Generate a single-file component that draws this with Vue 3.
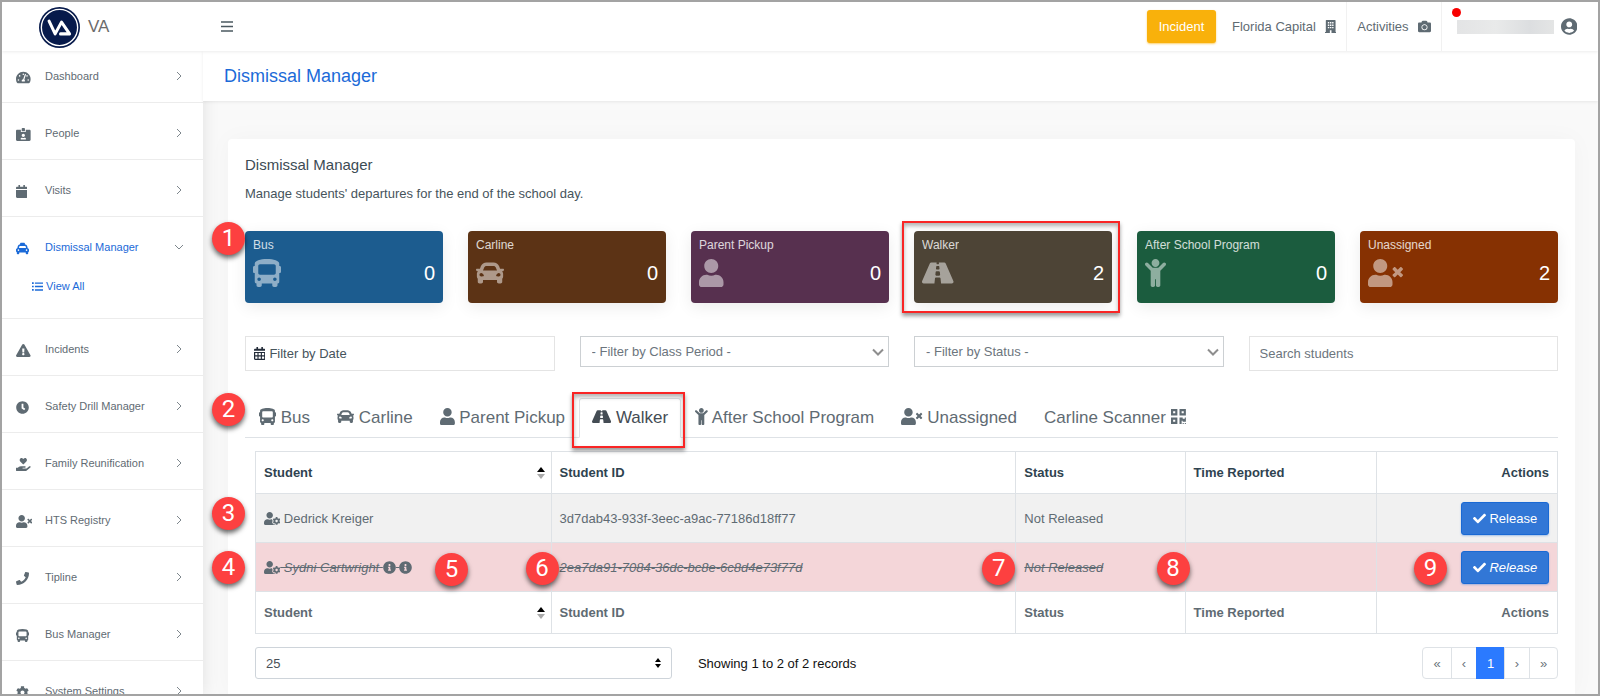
<template>
  <div class="page">
    <header class="topbar">
      <a href="#" class="brand">
        <svg class="brand-logo" viewBox="0 0 122 122" aria-hidden="true">
          <circle cx="61" cy="61" r="61" fill="#071a4b" />
          <circle cx="61" cy="61" r="54" fill="none" stroke="#fff" stroke-width="4" />
          <path d="M30 42L48 80L67 45L91 80H64" fill="none" stroke="#fff" stroke-width="9" stroke-linecap="round" stroke-linejoin="round" />
        </svg>
        <span>VA</span>
      </a>
      <button class="menu-btn" aria-label="Toggle menu">
        <svg viewBox="0 0 12 11"><path d="M0 1h12M0 5.5h12M0 10h12" stroke="#4b5960" stroke-width="1.4" /></svg>
      </button>
      <div class="topbar-right">
        <button class="incident-btn">Incident</button>
        <a href="#" class="top-item first">Florida Capital <Icon name="building" /></a>
        <a href="#" class="top-item">Activities <Icon name="camera" /></a>
        <a href="#" class="top-user" aria-label="Account">
          <span class="alert-dot"></span>
          <span class="user-name"></span>
          <Icon name="userCircle" />
        </a>
      </div>
    </header>

    <div class="body">
      <nav class="sidebar">
        <ul>
          <li v-for="item in menu" :key="item.label" :class="{ open: item.children }">
            <a href="#" class="nav-row">
              <span class="nav-icon"><Icon :name="item.icon" /></span>
              <span class="nav-label">{{ item.label }}</span>
              <svg class="nav-arrow" viewBox="0 0 10 10"><path d="M3 1l4 4-4 4" /></svg>
            </a>
            <a v-for="child in item.children" :key="child" href="#" class="nav-child">
              <Icon name="list" /> {{ child }}
            </a>
          </li>
        </ul>
      </nav>

      <div class="main">
        <div class="title-bar">
          <h1>Dismissal Manager</h1>
        </div>

        <section class="card">
          <h2>Dismissal Manager</h2>
          <p class="intro">Manage students' departures for the end of the school day.</p>

          <div class="stats">
            <span class="marker m1">1</span>
            <div v-for="stat in stats" :key="stat.label" class="stat" :class="stat.color">
              <div class="stat-label">{{ stat.label }}</div>
              <div class="stat-row">
                <Icon :name="stat.icon" />
                <span class="stat-count">{{ stat.count }}</span>
              </div>
              <span v-if="stat.label === activeTab" class="highlight"></span>
            </div>
          </div>

          <div class="filters">
            <label class="date-box">
              <Icon name="calendarAlt" />
              <input type="text" placeholder="Filter by Date" aria-label="Filter by Date">
            </label>
            <div class="select-box">
              <select aria-label="Filter by Class Period">
                <option>- Filter by Class Period -</option>
              </select>
              <svg viewBox="0 0 12 8"><path d="M1 1.5l5 5 5-5" /></svg>
            </div>
            <div class="select-box">
              <select aria-label="Filter by Status">
                <option>- Filter by Status -</option>
              </select>
              <svg viewBox="0 0 12 8"><path d="M1 1.5l5 5 5-5" /></svg>
            </div>
            <input v-model="search" class="search" type="text" placeholder="Search students" aria-label="Search students">
          </div>

          <div class="tabs" role="tablist">
            <span class="marker m2">2</span>
            <button
              v-for="stat in stats"
              :key="stat.label"
              class="tab"
              role="tab"
              :class="{ active: stat.label === activeTab }"
              @click="activeTab = stat.label"
            >
              <Icon :name="stat.icon" /> {{ stat.label }}
              <span v-if="stat.label === activeTab" class="highlight"></span>
            </button>
            <button class="tab" role="tab">Carline Scanner <Icon name="qrcode" /></button>
          </div>

          <div class="table-area">
            <table>
              <colgroup>
                <col class="col-student">
                <col class="col-id">
                <col class="col-status">
                <col class="col-time">
                <col>
              </colgroup>
              <thead>
                <tr>
                  <th>
                    <div class="sortable">Student <svg viewBox="0 0 10 12"><path d="M5 0l4 5H1z" fill="#000" /><path d="M5 12l4-5H1z" fill="#aaa" /></svg></div>
                  </th>
                  <th>Student ID</th>
                  <th>Status</th>
                  <th>Time Reported</th>
                  <th class="right">Actions</th>
                </tr>
              </thead>
              <tbody>
                <tr v-for="student in students" :key="student.id" :class="{ absent: student.absent }">
                  <td>
                    <Icon name="userCog" /> {{ student.name }}
                    <template v-if="student.absent"><Icon name="info" />&nbsp;<Icon name="info" /></template>
                    <span v-if="!student.absent" class="marker m3">3</span>
                    <template v-else>
                      <span class="marker m4">4</span>
                      <span class="marker m5">5</span>
                    </template>
                  </td>
                  <td>
                    {{ student.id }}
                    <span v-if="student.absent" class="marker m6">6</span>
                  </td>
                  <td>
                    {{ student.status }}
                    <span v-if="student.absent" class="marker m7">7</span>
                  </td>
                  <td>
                    <span v-if="student.absent" class="marker m8">8</span>
                  </td>
                  <td class="right">
                    <span v-if="student.absent" class="marker m9">9</span>
                    <button class="release-btn"><Icon name="check" /> Release</button>
                  </td>
                </tr>
              </tbody>
              <tfoot>
                <tr>
                  <th>
                    <div class="sortable">Student <svg viewBox="0 0 10 12"><path d="M5 0l4 5H1z" fill="#000" /><path d="M5 12l4-5H1z" fill="#aaa" /></svg></div>
                  </th>
                  <th>Student ID</th>
                  <th>Status</th>
                  <th>Time Reported</th>
                  <th class="right">Actions</th>
                </tr>
              </tfoot>
            </table>

            <div class="table-footer">
              <div class="page-size">
                <select aria-label="Records per page">
                  <option>25</option>
                </select>
                <svg viewBox="0 0 8 10"><path d="M4 0l3 4H1zM4 10l3-4H1z" /></svg>
              </div>
              <span class="showing">Showing 1 to 2 of 2 records</span>
              <nav class="pagination" aria-label="Pages">
                <button class="edge">«</button>
                <button>‹</button>
                <button class="edge current">1</button>
                <button>›</button>
                <button class="edge">»</button>
              </nav>
            </div>
          </div>
        </section>
      </div>
    </div>
  </div>
</template>

<script setup>
import { ref, h } from 'vue'

const userPath = 'M224 256c70.7 0 128-57.3 128-128S294.7 0 224 0 96 57.3 96 128s57.3 128 128 128zm89.6 32h-16.7c-22.2 10.2-46.9 16-72.9 16s-50.6-5.8-72.9-16h-16.7C60.2 288 0 348.2 0 422.4V464c0 26.5 21.5 48 48 48h352c26.5 0 48-21.5 48-48v-41.6c0-74.2-60.2-134.4-134.4-134.4z'

// [viewBox width, path]
const icons = {
  bus: [512, 'M488 128h-8V80c0-44.8-99.2-80-224-80S32 35.2 32 80v48h-8c-13.25 0-24 10.74-24 24v80c0 13.25 10.75 24 24 24h8v160c0 17.67 14.33 32 32 32v32c0 17.67 14.33 32 32 32h32c17.67 0 32-14.33 32-32v-32h192v32c0 17.67 14.33 32 32 32h32c17.67 0 32-14.33 32-32v-32h6.4c16 0 25.6-12.8 25.6-25.6V256h8c13.25 0 24-10.75 24-24v-80c0-13.26-10.75-24-24-24zM112 400c-17.67 0-32-14.33-32-32s14.33-32 32-32 32 14.33 32 32-14.33 32-32 32zm16-112c-17.67 0-32-14.33-32-32V128c0-17.67 14.33-32 32-32h256c17.67 0 32 14.33 32 32v128c0 17.67-14.33 32-32 32H128zm272 112c-17.67 0-32-14.33-32-32s14.33-32 32-32 32 14.33 32 32-14.33 32-32 32z'],
  car: [512, 'M499.99 176h-59.87l-16.64-41.6C406.38 91.63 365.57 64 319.5 64h-127c-46.06 0-86.88 27.63-103.99 70.4L71.87 176H12.01C4.2 176-1.53 183.34.37 190.91l6 24C7.7 220.25 12.5 224 18.01 224h20.07C24.65 235.73 16 252.78 16 272v48c0 16.12 6.16 30.67 16 41.93V416c0 17.67 14.33 32 32 32h32c17.67 0 32-14.33 32-32v-32h256v32c0 17.67 14.33 32 32 32h32c17.67 0 32-14.33 32-32v-54.07c9.84-11.25 16-25.8 16-41.93v-48c0-19.22-8.65-36.27-22.07-48H494c5.51 0 10.31-3.75 11.64-9.09l6-24c1.89-7.57-3.84-14.91-11.65-14.91zm-352.06-17.83c7.29-18.22 24.94-30.17 44.57-30.17h127c19.63 0 37.28 11.95 44.57 30.17L384 208H128l19.93-49.83zM96 319.8c-19.2 0-32-12.76-32-31.9S76.8 256 96 256s48 28.71 48 47.85-28.8 15.95-48 15.95zm320 0c-19.2 0-48 3.19-48-15.95S396.8 256 416 256s32 12.76 32 31.9-12.8 31.9-32 31.9z'],
  taxi: [512, 'M462 241.64l-22-84.84c-9.6-35.2-41.6-60.8-76.8-60.8H352V64c0-17.67-14.33-32-32-32H192c-17.67 0-32 14.33-32 32v32h-11.2c-35.2 0-67.2 25.6-76.8 60.8l-22 84.84C21.41 248.04 0 273.47 0 304v48c0 23.63 12.95 44.04 32 55.12V448c0 17.67 14.33 32 32 32h32c17.67 0 32-14.33 32-32v-32h256v32c0 17.67 14.33 32 32 32h32c17.67 0 32-14.33 32-32v-40.88c19.05-11.09 32-31.5 32-55.12v-48c0-30.53-21.41-55.96-50-62.36zM96 352c-17.67 0-32-14.33-32-32s14.33-32 32-32 32 14.33 32 32-14.33 32-32 32zm20.55-112l17.2-66.36c2.23-8.16 9.59-13.64 15.06-13.64h214.4c5.47 0 12.83 5.48 14.85 12.86L395.48 240H116.55zM416 352c-17.67 0-32-14.33-32-32s14.33-32 32-32 32 14.33 32 32-14.33 32-32 32z'],
  user: [448, userPath],
  userTimes: [640, 'M589.6 240l45.6-45.6c6.3-6.3 6.3-16.5 0-22.8l-22.8-22.8c-6.3-6.3-16.5-6.3-22.8 0L544 194.4l-45.6-45.6c-6.3-6.3-16.5-6.3-22.8 0l-22.8 22.8c-6.3 6.3-6.3 16.5 0 22.8l45.6 45.6-45.6 45.6c-6.3 6.3-6.3 16.5 0 22.8l22.8 22.8c6.3 6.3 16.5 6.3 22.8 0l45.6-45.6 45.6 45.6c6.3 6.3 16.5 6.3 22.8 0l22.8-22.8c6.3-6.3 6.3-16.5 0-22.8L589.6 240z' + userPath],
  userCog: [640, 'M610.5 373.3c2.6-14.1 2.6-28.5 0-42.6l25.8-14.9c3-1.7 4.3-5.2 3.3-8.5-6.7-21.6-18.2-41.2-33.2-57.4-2.3-2.5-6-3.1-9-1.4l-25.8 14.9c-10.9-9.3-23.4-16.5-36.9-21.3v-29.8c0-3.4-2.4-6.4-5.7-7.1-22.3-5-45-4.8-66.2 0-3.3.7-5.7 3.7-5.7 7.1v29.8c-13.5 4.8-26 12-36.9 21.3l-25.8-14.9c-2.9-1.7-6.7-1.1-9 1.4-15 16.2-26.5 35.8-33.2 57.4-1 3.3.4 6.8 3.3 8.5l25.8 14.9c-2.6 14.1-2.6 28.5 0 42.6l-25.8 14.9c-3 1.7-4.3 5.2-3.3 8.5 6.7 21.6 18.2 41.1 33.2 57.4 2.3 2.5 6 3.1 9 1.4l25.8-14.9c10.9 9.3 23.4 16.5 36.9 21.3v29.8c0 3.4 2.4 6.4 5.7 7.1 22.3 5 45 4.8 66.2 0 3.3-.7 5.7-3.7 5.7-7.1v-29.8c13.5-4.8 26-12 36.9-21.3l25.8 14.9c2.9 1.7 6.7 1.1 9-1.4 15-16.2 26.5-35.8 33.2-57.4 1-3.3-.4-6.8-3.3-8.5l-25.8-14.9zM496 400.5c-26.8 0-48.5-21.8-48.5-48.5s21.8-48.5 48.5-48.5 48.5 21.8 48.5 48.5-21.7 48.5-48.5 48.5zM224 256c70.7 0 128-57.3 128-128S294.7 0 224 0 96 57.3 96 128s57.3 128 128 128zm201.2 226.5c-2.3-1.2-4.6-2.6-6.8-3.9l-7.9 4.6c-6 3.4-12.8 5.3-19.6 5.3-10.9 0-21.4-4.6-28.9-12.6-18.3-19.8-32.3-43.9-40.2-69.6-5.5-17.7 1.9-36.4 17.9-45.7l7.9-4.6c-.1-2.6-.1-5.2 0-7.8l-7.9-4.6c-16-9.2-23.4-28-17.9-45.7.9-2.9 2.2-5.8 3.2-8.7-3.8-.3-7.5-1.2-11.4-1.2h-16.7c-22.2 10.2-46.9 16-72.9 16s-50.6-5.8-72.9-16h-16.7C60.2 288 0 348.2 0 422.4V464c0 26.5 21.5 48 48 48h352c10.1 0 19.5-3.2 27.2-8.5-1.2-3.8-2-7.7-2-11.8v-9.2z'],
  road: [576, 'M573.19 402.67l-139.79-320C428.43 71.29 417.6 64 405.68 64h-97.59l2.45 23.16c.5 4.72-3.21 8.84-7.96 8.84h-29.16c-4.75 0-8.46-4.12-7.96-8.84L267.91 64h-97.59c-11.93 0-22.76 7.29-27.73 18.67L2.8 402.67C-6.45 423.86 8.31 448 30.54 448h196.84l10.31-97.68c.86-8.14 7.72-14.32 15.91-14.32h68.8c8.19 0 15.05 6.18 15.91 14.32L348.62 448h196.84c22.23 0 36.99-24.14 27.73-45.33zM260.4 135.16a8 8 0 0 1 7.96-7.16h39.29c4.09 0 7.53 3.09 7.96 7.16l4.6 43.58c.75 7.09-4.81 13.26-11.93 13.26h-40.54c-7.13 0-12.68-6.17-11.93-13.26l4.59-43.58zM315.64 304h-55.29c-9.5 0-16.91-8.23-15.91-17.68l5.07-48c.86-8.14 7.72-14.32 15.91-14.32h45.15c8.19 0 15.05 6.18 15.91 14.32l5.07 48c1 9.45-6.41 17.68-15.91 17.68z'],
  child: [384, 'M120 72c0-39.765 32.235-72 72-72s72 32.235 72 72c0 39.764-32.235 72-72 72s-72-32.236-72-72zm254.627 1.373c-12.496-12.497-32.758-12.497-45.254 0L242.745 160H141.254L54.627 73.373c-12.496-12.497-32.758-12.497-45.254 0-12.497 12.497-12.497 32.758 0 45.255L104 213.254V480c0 17.673 14.327 32 32 32h16c17.673 0 32-14.327 32-32V368h16v112c0 17.673 14.327 32 32 32h16c17.673 0 32-14.327 32-32V213.254l94.627-94.627c12.497-12.496 12.497-32.757 0-45.254z'],
  gauge: [576, 'M288 32C128.94 32 0 160.94 0 320c0 52.8 14.25 102.26 39.06 144.8 5.61 9.62 16.3 15.2 27.44 15.2h443c11.14 0 21.83-5.58 27.44-15.2C561.75 422.26 576 372.8 576 320c0-159.06-128.94-288-288-288zm0 64c14.71 0 26.58 10.13 30.32 23.65-1.11 2.26-2.64 4.23-3.45 6.67l-9.22 27.67c-5.13 3.49-10.97 6.01-17.64 6.01-17.67 0-32-14.33-32-32S270.33 96 288 96zM96 384c-17.67 0-32-14.33-32-32s14.33-32 32-32 32 14.33 32 32-14.33 32-32 32zm48-160c-17.67 0-32-14.33-32-32s14.33-32 32-32 32 14.33 32 32-14.33 32-32 32zm246.77-72.41l-61.33 184C343.13 347.33 352 364.54 352 384c0 11.72-3.38 22.55-8.88 32H232.88c-5.5-9.45-8.88-20.28-8.88-32 0-33.94 26.5-61.43 59.9-63.59l61.34-184.01c4.17-12.56 17.73-19.45 30.36-15.17 12.57 4.19 19.35 17.79 15.17 30.36zm14.66 57.2l15.52-46.55c3.47-1.29 7.13-2.23 11.05-2.23 17.67 0 32 14.33 32 32s-14.33 32-32 32c-11.38-.01-20.89-6.28-26.57-15.22zM480 384c-17.67 0-32-14.33-32-32s14.33-32 32-32 32 14.33 32 32-14.33 32-32 32z'],
  idCard: [576, 'M528 64H384v96H192V64H48C21.5 64 0 85.5 0 112v352c0 26.5 21.5 48 48 48h480c26.5 0 48-21.5 48-48V112c0-26.5-21.5-48-48-48zM288 224c35.3 0 64 28.7 64 64s-28.7 64-64 64-64-28.7-64-64 28.7-64 64-64zm93.3 224H194.7c-10.4 0-18.8-10-15.6-19.8 8.3-25.6 32.4-44.2 60.9-44.2h8.2c12.3 5.1 25.7 8 39.8 8s27.6-2.9 39.8-8h8.2c28.4 0 52.5 18.5 60.9 44.2 3.2 9.9-5.2 19.8-15.6 19.8zM352 32c0-17.7-14.3-32-32-32h-64c-17.7 0-32 14.3-32 32v96h128V32z'],
  calendar: [448, 'M12 192h424c6.6 0 12 5.4 12 12v260c0 26.5-21.5 48-48 48H48c-26.5 0-48-21.5-48-48V204c0-6.6 5.4-12 12-12zm436-44v-36c0-26.5-21.5-48-48-48h-48V12c0-6.6-5.4-12-12-12h-40c-6.6 0-12 5.4-12 12v52H160V12c0-6.6-5.4-12-12-12h-40c-6.6 0-12 5.4-12 12v52H48C21.5 64 0 85.5 0 112v36c0 6.6 5.4 12 12 12h424c6.6 0 12-5.4 12-12z'],
  calendarAlt: [448, 'M0 192h448v272c0 26.5-21.5 48-48 48H48c-26.5 0-48-21.5-48-48zM48 240v88h88v-88zM180 240v88h88v-88zM312 240v88h88v-88zM48 372v88h88v-88zM180 372v88h88v-88zM312 372v88h88v-88zM448 148v-36c0-26.5-21.5-48-48-48h-48V12c0-6.6-5.4-12-12-12h-40c-6.6 0-12 5.4-12 12v52H160V12c0-6.6-5.4-12-12-12h-40c-6.6 0-12 5.4-12 12v52H48C21.5 64 0 85.5 0 112v36z'],
  list: [512, 'M0 56h80v80H0zM0 216h80v80H0zM0 376h80v80H0zM136 64h376v64H136zM136 224h376v64H136zM136 384h376v64H136z'],
  warning: [576, 'M569.517 440.013C587.975 472.007 564.806 512 527.94 512H48.054c-36.937 0-59.999-40.055-41.577-71.987L246.423 23.985c18.467-32.009 64.72-31.951 83.154 0l239.94 416.028zM288 354c-25.405 0-46 20.595-46 46s20.595 46 46 46 46-20.595 46-46-20.595-46-46-46zm-43.673-165.346l7.418 136c.347 6.364 5.609 11.346 11.982 11.346h48.546c6.373 0 11.635-4.982 11.982-11.346l7.418-136c.375-6.874-5.098-12.654-11.982-12.654h-63.383c-6.884 0-12.356 5.78-11.981 12.654z'],
  clock: [512, 'M256 8C119 8 8 119 8 256s111 248 248 248 248-111 248-248S393 8 256 8zm57.1 350.1L224.9 294c-3.1-2.3-4.9-5.9-4.9-9.7V116c0-6.6 5.4-12 12-12h48c6.6 0 12 5.4 12 12v137.7l63.5 46.2c5.4 3.9 6.5 11.4 2.6 16.8l-28.2 38.8c-3.9 5.3-11.4 6.5-16.8 2.6z'],
  handHeart: [576, 'M275.3 250.5c7 7.4 18.4 7.4 25.5 0l108.9-114.2c31.6-33.2 29.8-88.2-5.6-118.8-30.8-26.7-76.7-21.9-104.9 7.7L288 36.9l-11.1-11.6C248.7-4.4 202.8-9.2 172 17.5c-35.3 30.6-37.2 85.6-5.6 118.8l108.9 114.2zm290 77.6c-11.8-10.7-30.2-10-42.6 0L430.3 402c-11.3 9.1-25.4 14-40 14H272c-8.8 0-16-7.2-16-16s7.2-16 16-16h78.3c15.9 0 30.7-10.9 33.3-26.6 3.3-20-12.1-37.4-31.6-37.4H192c-27 0-53.1 9.3-74.1 26.3L71.4 384H16c-8.8 0-16 7.2-16 16v96c0 8.8 7.2 16 16 16h356.8c14.5 0 28.6-4.9 40-14L564 377c15.2-12.1 16.4-35.3 1.3-48.9z'],
  phone: [512, 'M493.4 24.6l-104-24c-11.3-2.6-22.9 3.3-27.5 13.9l-48 112c-4.2 9.8-1.4 21.3 6.9 28l60.6 49.6c-36 76.7-98.9 140.5-177.2 177.2l-49.6-60.6c-6.8-8.3-18.2-11.1-28-6.9l-112 48C3.9 366.5-2 378.1.6 389.4l24 104C27.1 504.2 36.7 512 48 512c256.1 0 464-207.5 464-464 0-11.2-7.7-20.9-18.6-23.4z'],
  cog: [512, 'M487.4 315.7l-42.6-24.6c4.3-23.2 4.3-47 0-70.2l42.6-24.6c4.9-2.8 7.1-8.6 5.5-14-11.1-35.6-30-67.8-54.7-94.6-3.8-4.1-10-5.1-14.8-2.3L380.8 110c-17.9-15.4-38.5-27.3-60.8-35.1V25.8c0-5.6-3.9-10.5-9.4-11.7-36.7-8.2-74.3-7.8-109.2 0-5.5 1.2-9.4 6.1-9.4 11.7V75c-22.2 7.9-42.8 19.8-60.8 35.1L88.7 85.5c-4.9-2.8-11-1.9-14.8 2.3-24.7 26.7-43.6 58.9-54.7 94.6-1.7 5.4.6 11.2 5.5 14L67.3 221c-4.3 23.2-4.3 47 0 70.2l-42.6 24.6c-4.9 2.8-7.1 8.6-5.5 14 11.1 35.6 30 67.8 54.7 94.6 3.8 4.1 10 5.1 14.8 2.3l42.6-24.6c17.9 15.4 38.5 27.3 60.8 35.1v49.2c0 5.6 3.9 10.5 9.4 11.7 36.7 8.2 74.3 7.8 109.2 0 5.5-1.2 9.4-6.1 9.4-11.7v-49.2c22.2-7.9 42.8-19.8 60.8-35.1l42.6 24.6c4.9 2.8 11 1.9 14.8-2.3 24.7-26.7 43.6-58.9 54.7-94.6 1.5-5.5-.7-11.3-5.6-14.1zM256 336c-44.1 0-80-35.9-80-80s35.9-80 80-80 80 35.9 80 80-35.9 80-80 80z'],
  check: [512, 'M173.898 439.404l-166.4-166.4c-9.997-9.997-9.997-26.206 0-36.204l36.203-36.204c9.997-9.998 26.207-9.998 36.204 0L192 312.69 432.095 72.596c9.997-9.997 26.207-9.997 36.204 0l36.203 36.204c9.997 9.997 9.997 26.206 0 36.204l-294.4 294.401c-9.998 9.997-26.207 9.997-36.204-.001z'],
  info: [512, 'M256 8C119.043 8 8 119.083 8 256c0 136.997 111.043 248 248 248s248-111.003 248-248C504 119.083 392.957 8 256 8zm0 110c23.196 0 42 18.804 42 42s-18.804 42-42 42-42-18.804-42-42 18.804-42 42-42zm56 254c0 6.627-5.373 12-12 12h-88c-6.627 0-12-5.373-12-12v-24c0-6.627 5.373-12 12-12h12v-64h-12c-6.627 0-12-5.373-12-12v-24c0-6.627 5.373-12 12-12h64c6.627 0 12 5.373 12 12v100h12c6.627 0 12 5.373 12 12v24z'],
  camera: [512, 'M512 144v288c0 26.5-21.5 48-48 48H48c-26.5 0-48-21.5-48-48V144c0-26.5 21.5-48 48-48h88l12.3-32.9c7-18.7 24.9-31.1 44.9-31.1h125.5c20 0 37.9 12.4 44.9 31.1L376 96h88c26.5 0 48 21.5 48 48zM376 288c0-66.2-53.8-120-120-120s-120 53.8-120 120 53.8 120 120 120 120-53.8 120-120zm-32 0c0 48.5-39.5 88-88 88s-88-39.5-88-88 39.5-88 88-88 88 39.5 88 88z'],
  userCircle: [496, 'M248 8C111 8 0 119 0 256s111 248 248 248 248-111 248-248S385 8 248 8zm0 96c48.6 0 88 39.4 88 88s-39.4 88-88 88-88-39.4-88-88 39.4-88 88-88zm0 344c-58.7 0-111.3-26.6-146.5-68.2 18.8-35.4 55.6-59.8 98.5-59.8 2.4 0 4.8.4 7.1 1.1 13 4.2 26.6 6.9 40.9 6.9 14.3 0 28-2.7 40.9-6.9 2.3-.7 4.7-1.1 7.1-1.1 42.9 0 79.7 24.4 98.5 59.8C359.3 421.4 306.7 448 248 448z'],
  building: [448, 'M0 476h32V24C32 10 42 0 56 0h336c14 0 24 10 24 24v452h32v36H256V400h-64v112H0zM112 80v56h56V80zM196 80v56h56V80zM280 80v56h56V80zM112 176v56h56v-56zM196 176v56h56v-56zM280 176v56h56v-56zM112 272v56h56v-56zM196 272v56h56v-56zM280 272v56h56v-56z'],
  qrcode: [448, 'M0 224h192V32H0v192zM64 96h64v64H64V96zm192-64v192h192V32H256zm128 128h-64V96h64v64zM0 480h192V288H0v192zm64-128h64v64H64v-64zm352-64h32v128h-96v-32h-32v96h-64V288h96v32h64v-32zm0 160h32v32h-32v-32zm-64 0h32v32h-32v-32z']
}

const Icon = (props) => {
  const [width, path] = icons[props.name]
  return h('svg', { class: 'icon', viewBox: `0 0 ${width} 512`, 'aria-hidden': 'true' }, [
    h('path', { d: path, fill: 'currentColor', 'fill-rule': 'evenodd' })
  ])
}
Icon.props = ['name']

const activeTab = ref('Walker')
const search = ref('')

const menu = [
  { label: 'Dashboard', icon: 'gauge' },
  { label: 'People', icon: 'idCard' },
  { label: 'Visits', icon: 'calendar' },
  { label: 'Dismissal Manager', icon: 'taxi', children: ['View All'] },
  { label: 'Incidents', icon: 'warning' },
  { label: 'Safety Drill Manager', icon: 'clock' },
  { label: 'Family Reunification', icon: 'handHeart' },
  { label: 'HTS Registry', icon: 'userTimes' },
  { label: 'Tipline', icon: 'phone' },
  { label: 'Bus Manager', icon: 'bus' },
  { label: 'System Settings', icon: 'cog' }
]

const stats = [
  { label: 'Bus', icon: 'bus', count: 0, color: 'blue' },
  { label: 'Carline', icon: 'car', count: 0, color: 'brown' },
  { label: 'Parent Pickup', icon: 'user', count: 0, color: 'purple' },
  { label: 'Walker', icon: 'road', count: 2, color: 'olive' },
  { label: 'After School Program', icon: 'child', count: 0, color: 'green' },
  { label: 'Unassigned', icon: 'userTimes', count: 2, color: 'rust' }
]

const students = [
  { name: 'Dedrick Kreiger', id: '3d7dab43-933f-3eec-a9ac-77186d18ff77', status: 'Not Released', absent: false },
  { name: 'Sydni Cartwright', id: '2ea7da91-7084-36dc-bc8e-6c8d4e73f77d', status: 'Not Released', absent: true }
]
</script>

<style>
body {
  margin: 0;
  font-family: "Liberation Sans", Arial, sans-serif;
}
</style>

<style scoped>
* {
  box-sizing: border-box;
}

button,
input,
select {
  font-family: inherit;
  font-size: 13px;
}

a {
  color: inherit;
  text-decoration: none;
}

.icon {
  height: 1em;
  width: auto;
  vertical-align: -2px;
  flex-shrink: 0;
}

.page {
  height: 100vh;
  display: flex;
  flex-direction: column;
  overflow: hidden;
  border: 2px solid #a3a3a3;
  background: #f9f9f9;
  color: #5f6b73;
  font-size: 13px;
}

/* Top bar */
.topbar {
  display: flex;
  align-items: center;
  height: 49px;
  flex-shrink: 0;
  background: #fff;
  box-shadow: 0 1px 3px rgba(0, 0, 0, 0.08);
  position: relative;
  z-index: 3;
}

.brand {
  display: flex;
  align-items: center;
  gap: 8px;
  width: 201px;
  padding-left: 37px;
  font-size: 17px;
  color: #6c6c6c;
}

.brand-logo {
  width: 41px;
  height: 41px;
  margin-top: 2px;
}

.menu-btn {
  display: flex;
  margin-left: 18px;
  padding: 0;
  border: none;
  background: none;
}

.menu-btn svg {
  width: 12px;
  height: 11px;
}

.topbar-right {
  display: flex;
  align-items: center;
  height: 100%;
  margin-left: auto;
  padding-right: 21px;
}

.incident-btn {
  width: 69px;
  height: 33px;
  padding: 0;
  border: none;
  border-radius: 3px;
  background: #f9b10b;
  color: #fff;
  box-shadow: 0 1px 2px rgba(249, 177, 11, 0.6);
}

.top-item {
  display: flex;
  align-items: center;
  gap: 9px;
  height: 100%;
  padding: 0 10px;
  border-right: 1px solid #f1f1f1;
}

.top-item.first {
  padding-left: 16px;
}

.top-user {
  display: flex;
  align-items: center;
  gap: 7px;
  padding-left: 15px;
  position: relative;
  font-size: 17px;
}

.user-name {
  width: 97px;
  height: 14px;
  background: linear-gradient(90deg, #e3e4e5, #e9eaea 40%, #dcdee0 75%, #e4e5e5);
}

.alert-dot {
  position: absolute;
  left: 10px;
  top: -10px;
  width: 9px;
  height: 9px;
  border-radius: 50%;
  background: #f80000;
}

/* Sidebar */
.body {
  display: flex;
  flex: 1;
  min-height: 0;
}

.sidebar {
  width: 201px;
  flex-shrink: 0;
  background: #fff;
  box-shadow: 0 0 16px rgba(0, 0, 0, 0.1);
  font-size: 11px;
}

.sidebar ul {
  margin: 0;
  padding: 0;
  list-style: none;
}

.sidebar li {
  border-bottom: 1px solid #ececec;
}

.sidebar li + li {
  padding-top: 5px;
}

.nav-row {
  display: flex;
  align-items: center;
  height: 51px;
  padding: 0 19px 2px 14px;
}

.nav-icon {
  display: flex;
  width: 29px;
  padding-top: 3px;
  font-size: 13px;
}

.nav-arrow {
  width: 10px;
  height: 10px;
  margin-left: auto;
  fill: none;
  stroke: #7d868c;
  stroke-width: 1;
}

.sidebar .open {
  padding-bottom: 19px;
  color: #1b6ad8;
}

.open .nav-arrow {
  transform: rotate(90deg);
}

.nav-child {
  display: block;
  padding-left: 30px;
  line-height: 26px;
}

/* Main */
.main {
  flex: 1;
  min-width: 0;
  display: flex;
  flex-direction: column;
}

.title-bar {
  display: flex;
  align-items: center;
  height: 50px;
  flex-shrink: 0;
  padding-left: 21px;
  background: #fff;
  box-shadow: 0 1px 3px rgba(0, 0, 0, 0.08);
}

h1 {
  margin: 0;
  font-size: 18px;
  font-weight: 400;
  color: #1b6ad8;
}

.card {
  flex: 1;
  margin: 38px 23px 0 25px;
  padding: 16px 17px 0;
  border-radius: 4px 4px 0 0;
  background: #fff;
  box-shadow: 0 0 24px rgba(0, 0, 0, 0.03);
}

h2 {
  margin: 0;
  font-size: 15px;
  font-weight: 400;
  line-height: 20px;
  color: #3c4b54;
}

.intro {
  margin: 10px 0 28px;
  line-height: 18px;
  color: #46545c;
}

.stats {
  display: grid;
  grid-template-columns: repeat(6, 1fr);
  gap: 25px;
  position: relative;
}

.stat {
  height: 72px;
  padding: 6px 8px;
  border-radius: 4px;
  color: #fff;
  position: relative;
  box-shadow: 0 4px 16px rgba(0, 0, 0, 0.08);
}

.blue { background: #1c5c8f; }
.brown { background: #5c3315; }
.purple { background: #57304f; }
.olive { background: #4d4436; }
.green { background: #1b5c3e; }
.rust { background: #863102; }

.stat-label {
  font-size: 12px;
  line-height: 16px;
  opacity: 0.8;
}

.stat-row {
  display: flex;
  align-items: center;
  justify-content: space-between;
  padding-top: 4px;
}

.stat-row .icon {
  font-size: 28px;
  opacity: 0.5;
}

.stat-count {
  font-size: 20px;
  line-height: 32px;
}

/* Filters */
.filters {
  display: grid;
  grid-template-columns: repeat(4, 1fr);
  align-items: start;
  gap: 25px;
  margin-top: 33px;
}

.date-box,
.search {
  width: 100%;
  height: 35px;
  border: 1px solid #e4e4e4;
  background: #fff;
}

.search {
  padding: 0 10px;
}

.date-box {
  display: flex;
  align-items: center;
  gap: 4px;
  padding-left: 8px;
  color: #222b38;
}

.date-box input {
  flex: 1;
  min-width: 0;
  padding: 0;
  border: none;
  outline: none;
}

.date-box input::placeholder {
  color: #46545c;
}

.search::placeholder {
  color: #6c757d;
}

.select-box {
  display: flex;
  position: relative;
}

.select-box select {
  width: 100%;
  height: 31px;
  padding: 0 11px;
  appearance: none;
  border: 1px solid #ccd0d3;
  border-radius: 0;
  background: #fff;
  color: #6c757d;
}

.select-box svg {
  position: absolute;
  right: 5px;
  top: 12px;
  width: 12px;
  height: 8px;
  fill: none;
  stroke: #8e8e8e;
  stroke-width: 2;
  pointer-events: none;
}

/* Tabs */
.tabs {
  display: flex;
  gap: 1px;
  height: 40px;
  margin-top: 27px;
  padding-left: 1px;
  border-bottom: 1px solid #dee2e6;
  position: relative;
}

.tab {
  height: 40px;
  padding: 0 12px;
  border: 1px solid transparent;
  border-radius: 3px 3px 0 0;
  background: none;
  color: #5f6b73;
  font-size: 17px;
  white-space: nowrap;
  position: relative;
}

.tab.active {
  border-color: #dee2e6 #dee2e6 #fff;
  background: #fff;
  color: #444c54;
}

/* Table */
.table-area {
  padding: 13px 0 0 10px;
}

table {
  width: 100%;
  table-layout: fixed;
  border-collapse: collapse;
}

.col-student { width: 22.7%; }
.col-id { width: 35.7%; }
.col-status { width: 13%; }
.col-time { width: 14.7%; }

th,
td {
  padding: 0 8px;
  border: 1px solid #dee2e6;
  text-align: left;
  position: relative;
}

th {
  height: 42px;
}

thead th {
  color: #2f4350;
}

td {
  height: 49px;
}

tbody tr {
  background: #f1f1f1;
}

tbody .absent {
  background: #f4d6d9;
}

.absent td {
  font-style: italic;
  text-decoration: line-through;
}

.right {
  text-align: right;
}

.sortable {
  display: flex;
  align-items: center;
  justify-content: space-between;
}

.sortable svg {
  width: 10px;
  height: 12px;
  margin-right: -3px;
}

.release-btn {
  width: 88px;
  height: 33px;
  padding: 0;
  border: 1px solid #1a69d4;
  border-radius: 3px;
  background: #3277d6;
  color: #fff;
  font-style: inherit;
  box-shadow: 0 1px 2px rgba(50, 119, 214, 0.4);
}

.table-footer {
  display: flex;
  align-items: center;
  margin-top: 13px;
}

.page-size {
  width: 32%;
  position: relative;
}

.page-size select {
  display: block;
  width: 100%;
  height: 32px;
  padding: 0 10px;
  appearance: none;
  border: 1px solid #ced4da;
  border-radius: 3px;
  background: #fff;
  color: #495057;
}

.page-size svg {
  position: absolute;
  right: 10px;
  top: 11px;
  width: 8px;
  height: 10px;
  pointer-events: none;
}

.showing {
  margin-left: 26px;
  color: #111;
}

.pagination {
  display: flex;
  margin-left: auto;
  border: 1px solid #dee2e6;
  border-radius: 4px;
}

.pagination button {
  width: 25px;
  height: 30px;
  padding: 0;
  border: none;
  border-left: 1px solid #dee2e6;
  background: none;
  color: #6c757d;
}

.pagination .edge {
  width: 28px;
}

.pagination button:first-child {
  border-left: none;
}

.pagination .current {
  height: 32px;
  margin: -1px 0;
  border-color: #2b7aff;
  background: #2b7aff;
  color: #fff;
}

/* Callouts */
.highlight {
  position: absolute;
  inset: -10px -8px -10px -12px;
  border: 2px solid #f92525;
  box-shadow: 0 3px 4px rgba(0, 0, 0, 0.4), inset 0 3px 4px rgba(0, 0, 0, 0.3);
  z-index: 2;
}

.tab .highlight {
  inset: -7px -5px -11px -8px;
}

.marker {
  position: absolute;
  width: 33px;
  height: 33px;
  border-radius: 50%;
  background: #fd4040;
  color: #fff;
  font-family: Roboto, sans-serif;
  font-size: 24px;
  font-style: normal;
  line-height: 33px;
  text-align: center;
  box-shadow: 0 3px 5px rgba(0, 0, 0, 0.6);
  z-index: 2;
}

.m1 { left: -33px; top: -9px; }
.m2 { left: -33px; top: -5px; }
.m3 { left: -44px; top: 3px; }
.m4 { left: -44px; top: 8px; }
.m5 { left: 179px; top: 10px; }
.m6 { left: -26px; top: 9px; }
.m7 { left: -34px; top: 9px; }
.m8 { left: -29px; top: 9px; }
.m9 { left: 37px; top: 9px; }
</style>
